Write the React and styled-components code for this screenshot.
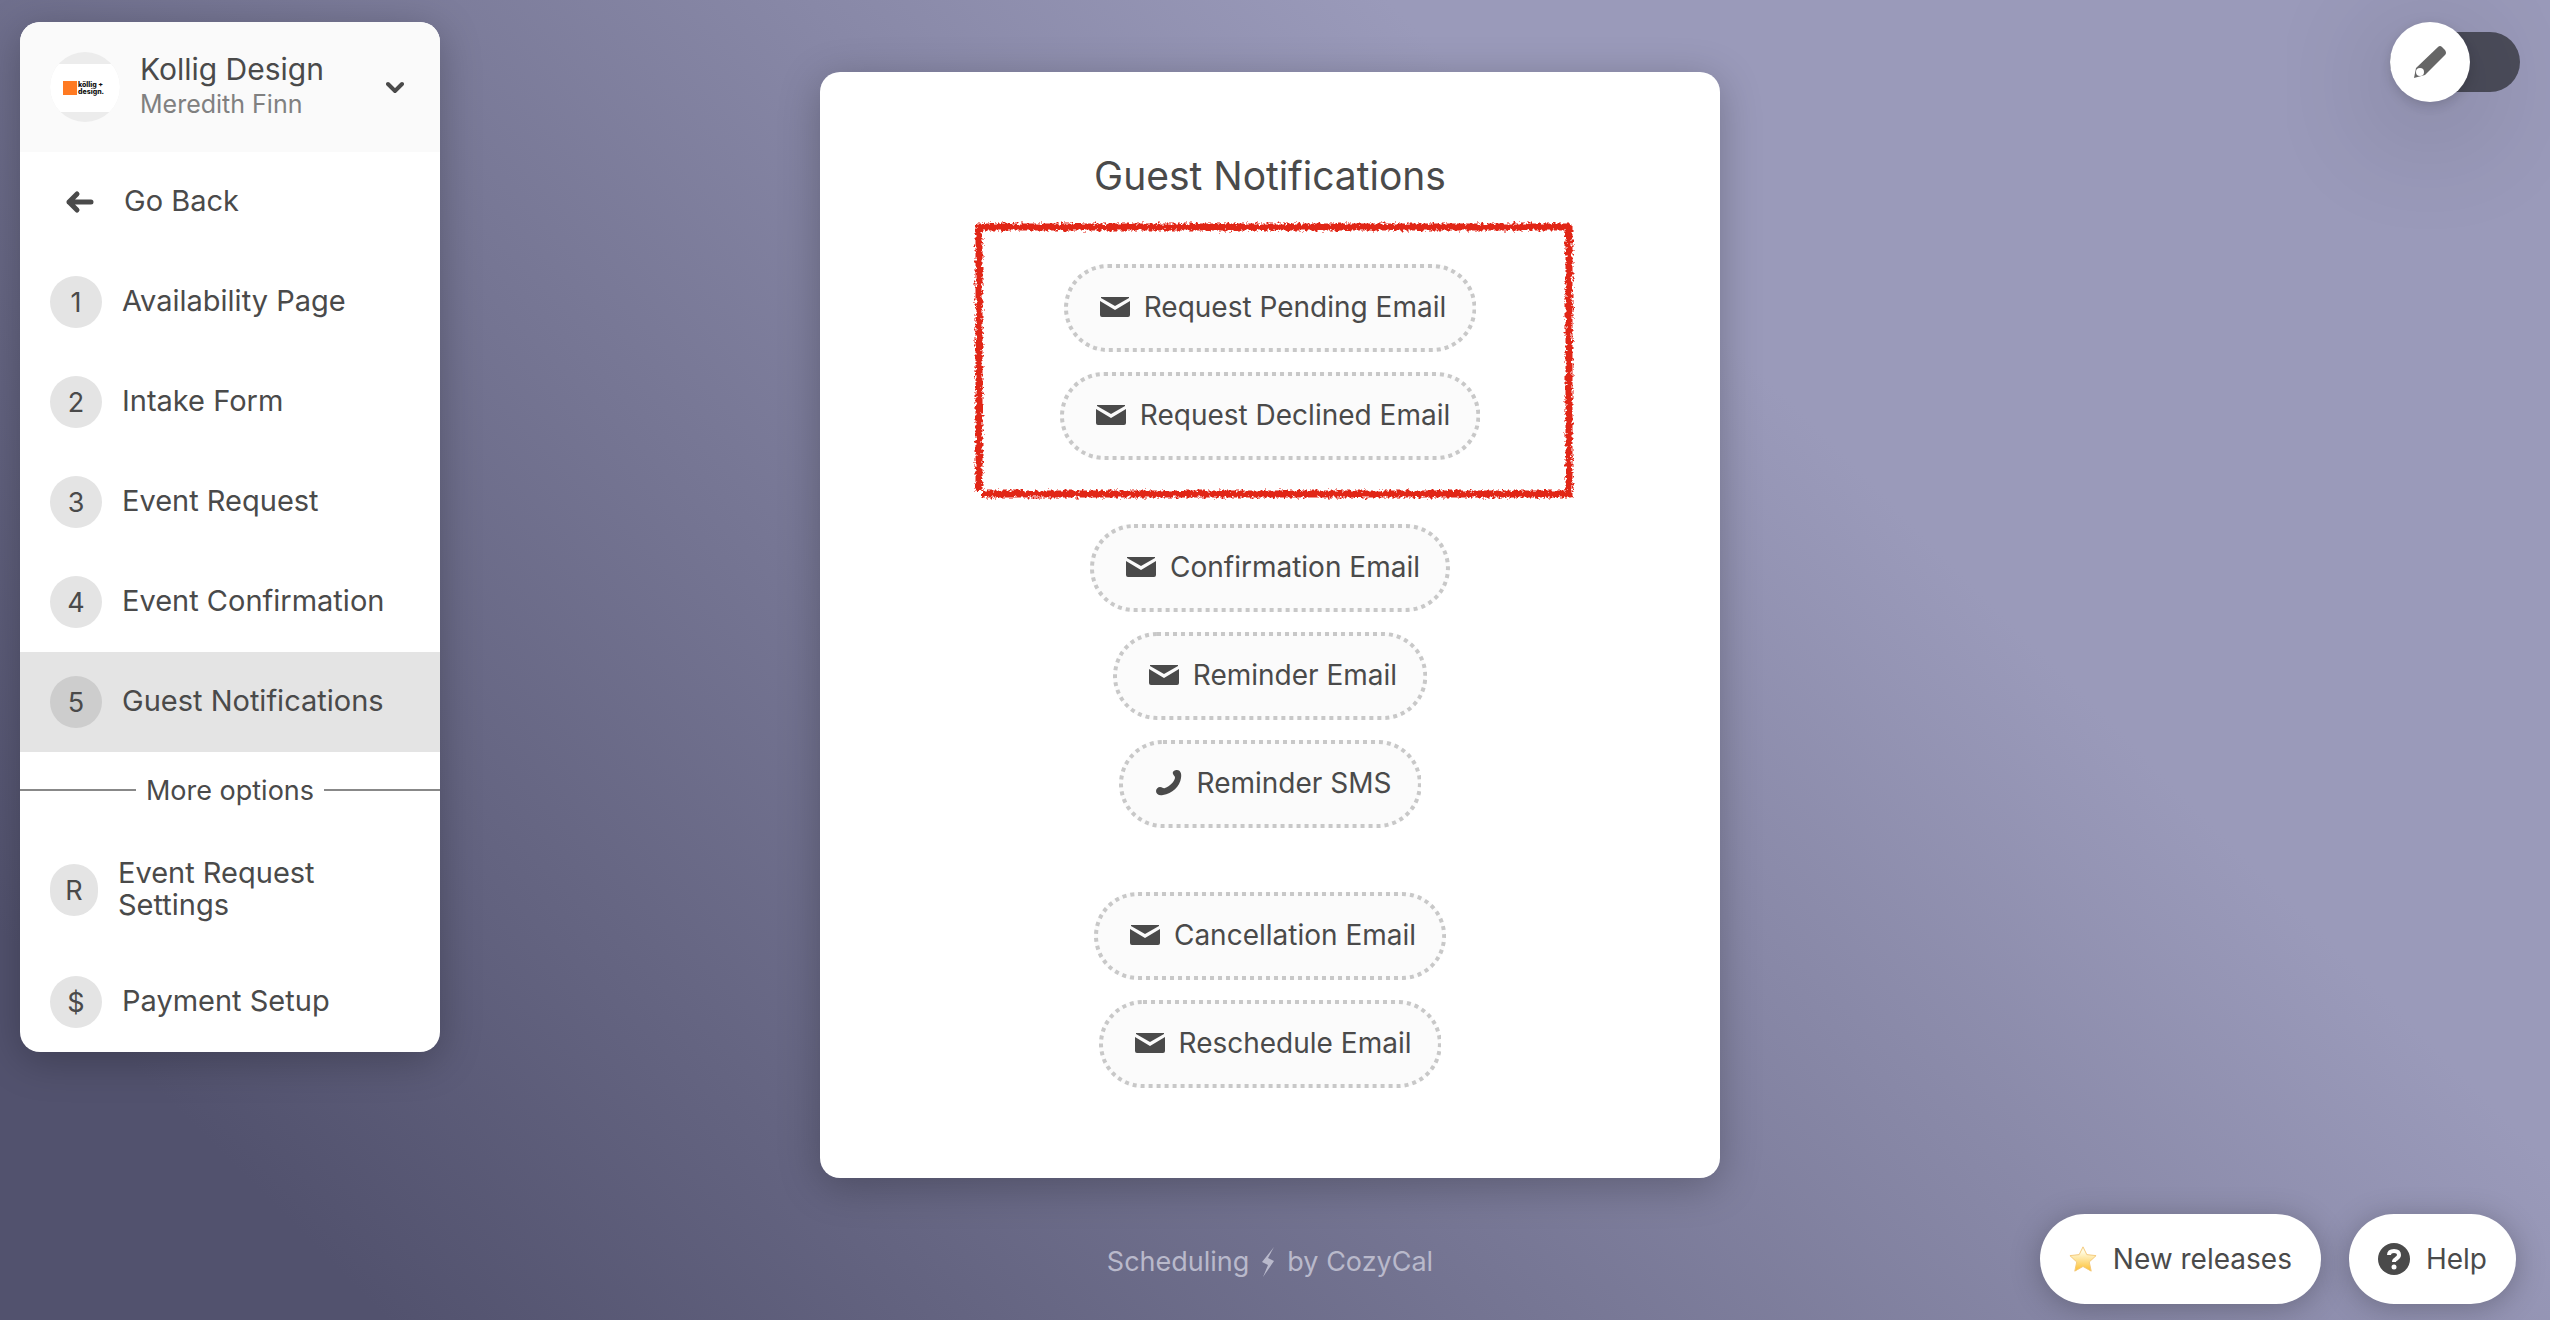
import styled, { createGlobalStyle } from 'styled-components'

const GlobalStyle = createGlobalStyle`
  * {
    box-sizing: border-box;
  }

  body {
    margin: 0;
    color: #4a4a4a;
    font-family: Inter, 'Liberation Sans', sans-serif;
    font-size: 28px;
  }

  button {
    border: 0;
    color: inherit;
    font: inherit;
    cursor: pointer;
  }
`

const Page = styled.div`
  display: grid;
  grid-template-columns: 1fr minmax(auto, 900px) 1fr;
  min-height: 100vh;
  padding: 22px 30px 16px 20px;
  background: linear-gradient(45deg, #52526e 0%, #52526e 10%, #9a9aba 70%, #9a9aba 100%);
`

const Sidebar = styled.aside`
  align-self: start;
  width: 420px;
  overflow: hidden;
  background: white;
  border-radius: 20px;
  box-shadow: 0 8px 40px rgba(0, 0, 0, 0.25);
`

const Account = styled.button`
  display: flex;
  align-items: center;
  width: 100%;
  height: 130px;
  padding: 0 36px 0 30px;
  background: #fafafa;
  text-align: left;
`

const Avatar = styled.svg`
  flex: none;
  width: 70px;
  height: 70px;
  margin-right: 20px;
`

const AccountText = styled.span`
  flex: 1;
  padding-bottom: 4px;
  font-size: 30px;
  line-height: 38px;
`

const UserName = styled.span`
  display: block;
  color: #808080;
  font-size: 25px;
  line-height: 32px;
`

const NavItem = styled.a`
  display: flex;
  align-items: center;
  gap: 20px;
  padding: 24px 30px;
  background: ${({ $active }) => ($active ? '#e4e4e4' : 'transparent')};
  color: inherit;
  text-decoration: none;
`

const Badge = styled.span`
  display: grid;
  place-items: center;
  flex: none;
  width: ${({ $narrow }) => ($narrow ? 48 : 52)}px;
  height: 52px;
  border-radius: 26px;
  background: ${({ $active }) => ($active ? '#cdcdcd' : '#e4e4e4')};
  font-size: 27px;
`

const BackIcon = styled.svg`
  width: 60px;
  height: 52px;
  margin-right: -6px;
`

const Label = styled.span`
  padding: 5px 0 7px;
  font-size: 29px;
  line-height: 32px;
`

const Divider = styled.div`
  display: flex;
  align-items: center;
  gap: 10px;
  height: 76px;
  font-size: 27px;

  &::before,
  &::after {
    content: '';
    flex: 1;
    height: 2px;
    background: #888;
  }
`

const Main = styled.main`
  padding-top: 50px;
`

const Card = styled.section`
  display: flex;
  flex-direction: column;
  align-items: center;
  padding: 79px 40px 90px;
  background: white;
  border-radius: 20px;
  box-shadow: 0 8px 40px rgba(0, 0, 0, 0.25);
`

const Title = styled.h1`
  margin: 0 0 63px;
  font-size: 39px;
  font-weight: 400;
  line-height: 50px;
`

const Group = styled.div`
  position: relative;
  display: flex;
  flex-direction: column;
  align-items: center;
  gap: 20px;

  & + & {
    margin-top: 64px;
  }
`

const Pill = styled.button`
  position: relative;
  display: flex;
  align-items: center;
  gap: 14px;
  height: 88px;
  padding: 0 30px 2px 36px;
  border-radius: 44px;
  background: #fbfbfb;
`

const Dots = styled.svg`
  position: absolute;
  inset: 0;
  width: 100%;
  height: 100%;

  rect {
    width: calc(100% - 4px);
    height: calc(100% - 4px);
    fill: none;
    stroke: #c8c8c8;
    stroke-width: 4px;
    stroke-dasharray: 4 4;
  }
`

const Marker = styled.svg`
  position: absolute;
  top: -46px;
  left: calc(50% - 300px);
  width: 608px;
  height: 284px;
  pointer-events: none;
`

const Footer = styled.footer`
  display: flex;
  align-items: center;
  justify-content: center;
  gap: 12px;
  padding-top: 68px;
  color: #b9b9cb;
  font-size: 27px;
  line-height: 32px;
`

const Tools = styled.div`
  display: flex;
  flex-direction: column;
  align-items: flex-end;
  justify-content: space-between;
`

const EditToggle = styled.button`
  display: flex;
  align-items: center;
  width: 130px;
  height: 60px;
  margin-top: 10px;
  padding: 0;
  border-radius: 30px;
  background: #4b4c5a;
`

const Knob = styled.span`
  display: grid;
  place-items: center;
  width: 80px;
  height: 80px;
  border-radius: 50%;
  background: white;
  box-shadow: 0 20px 120px rgba(0, 0, 0, 0.3), 0 4px 12px rgba(0, 0, 0, 0.15);
`

const Actions = styled.div`
  display: flex;
  gap: 28px;
  padding-right: 4px;
`

const ActionButton = styled.button`
  display: flex;
  align-items: center;
  gap: 16px;
  height: 90px;
  padding: 0 29px;
  border-radius: 45px;
  background: white;
  box-shadow: 0 4px 30px rgba(0, 0, 0, 0.25);
`

const steps = [
  { badge: '1', label: 'Availability Page' },
  { badge: '2', label: 'Intake Form' },
  { badge: '3', label: 'Event Request' },
  { badge: '4', label: 'Event Confirmation' },
  { badge: '5', label: 'Guest Notifications', active: true },
]

const options = [
  { badge: 'R', label: 'Event Request Settings', narrow: true },
  { badge: '$', label: 'Payment Setup' },
]

const groups = [
  { marked: true, items: ['Request Pending Email', 'Request Declined Email'] },
  { items: ['Confirmation Email', 'Reminder Email', 'Reminder SMS'] },
  { items: ['Cancellation Email', 'Reschedule Email'] },
]

function MailIcon() {
  return (
    <svg width="30" height="20" viewBox="0 0 30 20" fill="#4a4a4a" aria-hidden="true">
      <path d="M1 0h28v1L15 9 1 1z" />
      <path d="M0 4l15 9 15-9v14q0 2-2 2H2q-2 0-2-2z" />
    </svg>
  )
}

function PhoneIcon() {
  return (
    <svg width="28" height="28" viewBox="0 0 28 28" fill="#4a4a4a" aria-hidden="true">
      <path d="M18 5C17 2 20 1 22 1c3 0 5 3 4 8-1 8-9 16-18 17-4 1-7-1-7-4 0-2 2-4 4-4 3 0 3 2 5 1 5-2 9-6 10-10 0-2-1-2-2-4z" />
    </svg>
  )
}

function RedMarker() {
  return (
    <Marker viewBox="0 0 608 284" aria-hidden="true">
      <filter id="chalk" x="0" y="0" width="608" height="284" filterUnits="userSpaceOnUse">
        <feTurbulence type="fractalNoise" baseFrequency="0.35" numOctaves="3" seed="4" />
        <feDisplacementMap in="SourceGraphic" scale="7" xChannelSelector="R" yChannelSelector="G" />
      </filter>
      <g fill="none" stroke="#e12717" strokeWidth="7" filter="url(#chalk)">
        <path d="M6 9H599V276H12" />
        <path d="M9 7V273" />
      </g>
    </Marker>
  )
}

function NavLink({ item }) {
  return (
    <NavItem href="#" $active={item.active} aria-current={item.active ? 'page' : undefined}>
      <Badge $active={item.active} $narrow={item.narrow}>
        {item.badge}
      </Badge>
      <Label>{item.label}</Label>
    </NavItem>
  )
}

export default function App() {
  return (
    <Page>
      <GlobalStyle />
      <Sidebar>
        <Account type="button">
          <Avatar viewBox="0 0 70 70" aria-hidden="true">
            <clipPath id="avatar">
              <circle cx="35" cy="35" r="35" />
            </clipPath>
            <g clipPath="url(#avatar)">
              <rect width="70" height="70" fill="#ececec" />
              <rect y="12" width="70" height="48" fill="white" />
            </g>
            <rect x="13" y="29" width="14" height="14" fill="#ff7a22" />
            <g fill="#111" fontSize="7" fontWeight="800">
              <text x="28" y="35">köllig +</text>
              <text x="28" y="42">design.</text>
            </g>
          </Avatar>
          <AccountText>
            Kollig Design
            <UserName>Meredith Finn</UserName>
          </AccountText>
          <svg width="18" height="12" viewBox="0 0 18 12" fill="none" stroke="#4a4a4a" strokeWidth="4" aria-hidden="true">
            <path d="M2 3l7 7 7-7" strokeLinecap="round" />
          </svg>
        </Account>
        <nav>
          <NavItem href="#">
            <BackIcon viewBox="0 0 60 52" fill="none" stroke="#4a4a4a" strokeWidth="5" strokeLinecap="round" strokeLinejoin="round" aria-hidden="true">
              <path d="M27 18l-8 8 8 8M19 26h22" />
            </BackIcon>
            <Label>Go Back</Label>
          </NavItem>
          {steps.map((item) => (
            <NavLink key={item.label} item={item} />
          ))}
          <Divider>More options</Divider>
          {options.map((item) => (
            <NavLink key={item.label} item={item} />
          ))}
        </nav>
      </Sidebar>

      <Main>
        <Card>
          <Title>Guest Notifications</Title>
          {groups.map(({ items, marked }) => (
            <Group key={items[0]}>
              {items.map((name) => (
                <Pill type="button" key={name}>
                  <Dots aria-hidden="true">
                    <rect x="2" y="2" rx="42" />
                  </Dots>
                  {name.endsWith('SMS') ? <PhoneIcon /> : <MailIcon />}
                  {name}
                </Pill>
              ))}
              {marked && <RedMarker />}
            </Group>
          ))}
        </Card>
        <Footer>
          <span>Scheduling</span>
          <svg width="14" height="30" viewBox="0 0 14 30" fill="#b9b9cb" aria-hidden="true">
            <path d="M13 0L1 15l6 3-5 12 11-16-6-3z" />
          </svg>
          <span>by CozyCal</span>
        </Footer>
      </Main>

      <Tools>
        <EditToggle type="button" aria-label="Edit mode">
          <Knob>
            <svg width="32" height="32" viewBox="0 0 32 32" aria-hidden="true">
              <path d="M0 32L2 22 24 1q2-2 4 0l3 3q2 3 0 5L11 29z" fill="#666" />
              <circle cx="6" cy="26" r="4" fill="white" />
            </svg>
          </Knob>
        </EditToggle>
        <Actions>
          <ActionButton type="button">
            <svg width="28" height="28" viewBox="0 0 30 28" aria-hidden="true">
              <linearGradient id="star" x2="0" y2="1">
                <stop offset="0.2" stopColor="#fffbe0" />
                <stop offset="1" stopColor="#fdc02f" />
              </linearGradient>
              <path
                d="M15 1L19.1 9.3 29 10.4 21.7 17.2 23.8 27 15 22 6.2 27 8.3 17.2 1 10.4 10.9 9.3z"
                fill="url(#star)"
                stroke="#f3c777"
                strokeLinejoin="round"
              />
            </svg>
            New releases
          </ActionButton>
          <ActionButton type="button">
            <svg width="32" height="32" viewBox="0 0 32 32" aria-hidden="true">
              <circle cx="16" cy="16" r="16" fill="#4a4a4a" />
              <path d="M11 12q0-4 5-4 5 0 5 4 0 2-3 4-2 1-2 3" fill="none" stroke="white" strokeWidth="4" />
              <circle cx="16" cy="24" r="2.5" fill="white" />
            </svg>
            Help
          </ActionButton>
        </Actions>
      </Tools>
    </Page>
  )
}
